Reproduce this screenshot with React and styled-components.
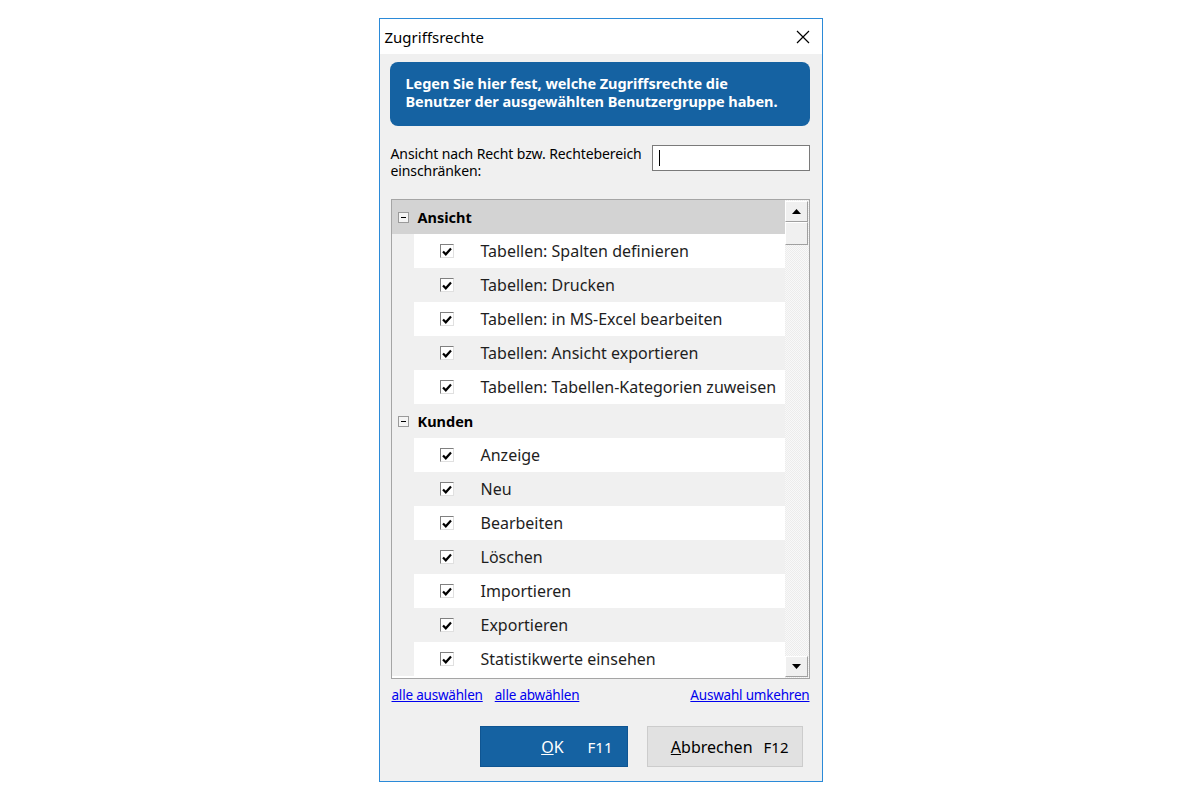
import React from 'react';
import styled, { createGlobalStyle } from 'styled-components';

const GlobalStyle = createGlobalStyle`
  html, body {
    margin: 0;
    padding: 0;
    background: #fff;
    font-family: "Noto Sans", "Open Sans", sans-serif;
  }
`;

const Page = styled.div`
  display: flex;
  justify-content: center;
  padding-top: 18px;
  padding-left: 1px;
`;

const Window = styled.div`
  width: 444px;
  height: 764px;
  box-sizing: border-box;
  border: 1px solid #2b8ad8;
  background: #f0f0f0;
  display: flex;
  flex-direction: column;
`;

const TitleBar = styled.div`
  height: 35px;
  background: #fff;
  display: flex;
  align-items: center;
  justify-content: space-between;
  padding: 0 12px 0 5px;
  font-size: 15px;
  color: #000;
`;

const Close = styled.svg`
  width: 14px;
  height: 14px;
`;

const Body = styled.div`
  flex: 1;
  display: flex;
  flex-direction: column;
  padding: 8px 12px 14px 10px;
`;

const Banner = styled.div`
  height: 64px;
  box-sizing: border-box;
  border-radius: 8px;
  background: #1562a2;
  color: #fff;
  font-weight: bold;
  font-size: 14.5px;
  line-height: 18px;
  padding: 12px 0 0 16px;
  letter-spacing: -0.05px;
`;

const FilterRow = styled.div`
  display: flex;
  justify-content: space-between;
  align-items: flex-start;
  margin-top: 19px;
  padding-left: 1px;
`;

const FilterLabel = styled.div`
  font-size: 14px;
  line-height: 17px;
  color: #000;
  width: 260px;
  letter-spacing: -0.1px;
`;

const Input = styled.div`
  width: 158px;
  height: 26px;
  box-sizing: border-box;
  border: 1px solid #7a7a7a;
  background: #fff;
  display: flex;
  align-items: center;
  padding-left: 6px;
  &::after {
    content: '';
    width: 1px;
    height: 16px;
    background: #000;
  }
`;

const ListBox = styled.div`
  margin-top: 20px;
  margin-left: 1px;
  height: 480px;
  box-sizing: border-box;
  border: 1px solid #a5a5a5;
  background: #fff;
  display: flex;
  overflow: hidden;
`;

const Rows = styled.div`
  flex: 1;
  display: flex;
  flex-direction: column;
`;

const GroupRow = styled.div`
  height: 34px;
  flex-shrink: 0;
  display: flex;
  align-items: center;
  background: ${p => (p.$active ? '#d3d3d3' : '#f0f0f0')};
  font-weight: bold;
  font-size: 14.5px;
  color: #000;
`;

const Minus = styled.span`
  width: 11px;
  height: 11px;
  box-sizing: border-box;
  border: 1px solid #9a9a9a;
  background: #f4f4f4;
  margin: 0 9px 0 6px;
  display: flex;
  align-items: center;
  justify-content: center;
  &::after {
    content: '';
    width: 5px;
    height: 1px;
    background: #000;
  }
`;

const ItemRow = styled.div`
  height: 34px;
  flex-shrink: 0;
  display: flex;
  align-items: center;
  border-left: 22px solid #f0f0f0;
  background: ${p => (p.$alt ? '#f0f0f0' : '#fff')};
  font-size: 16px;
  color: #1e1e1e;
  white-space: nowrap;
`;

const Check = styled.span`
  width: 14px;
  height: 14px;
  box-sizing: border-box;
  border-top: 1px solid #808080;
  border-left: 1px solid #808080;
  border-right: 1px solid #e0e0e0;
  border-bottom: 1px solid #e0e0e0;
  background: #fff;
  margin: 0 27px 0 26px;
  display: flex;
  align-items: center;
  justify-content: center;
`;

const ScrollBar = styled.div`
  width: 23px;
  flex-shrink: 0;
  display: flex;
  flex-direction: column;
  background-color: #f4f4f4;
  background-image: repeating-conic-gradient(#ececec 0 25%, #f9f9f9 0 50%);
  background-size: 2px 2px;
  padding-top: 1px;
  padding-right: 1px;
`;

const ScrollButton = styled.div`
  height: 21px;
  box-sizing: border-box;
  background: #f0f0f0;
  border-top: 1px solid #fff;
  border-left: 1px solid #fff;
  border-right: 1px solid #a0a0a0;
  border-bottom: 1px solid #a0a0a0;
  display: flex;
  align-items: center;
  justify-content: center;
  margin-top: ${p => (p.$down ? 'auto' : '0')};
  margin-bottom: ${p => (p.$down ? '1px' : '0')};
`;

const Thumb = styled(ScrollButton)`
  height: 23px;
`;

const Links = styled.div`
  display: flex;
  gap: 12px;
  margin-top: 8px;
  padding-left: 2px;
  font-size: 13.5px;
  line-height: 17px;
`;

const Link = styled.a`
  color: #0000ee;
  text-decoration: underline;
  cursor: pointer;
  letter-spacing: -0.2px;
  margin-left: ${p => (p.$right ? 'auto' : '0')};
`;

const Buttons = styled.div`
  margin-top: auto;
  display: flex;
  justify-content: flex-end;
  gap: 19px;
  padding-right: 7px;
`;

const Button = styled.button`
  width: ${p => p.$w}px;
  height: 41px;
  box-sizing: border-box;
  border: 1px solid ${p => (p.$primary ? '#0f5592' : '#cccccc')};
  background: ${p => (p.$primary ? '#1562a2' : '#e1e1e1')};
  color: ${p => (p.$primary ? '#fff' : '#000')};
  font-family: "Noto Sans", "Open Sans", sans-serif;
  font-size: 16px;
  display: flex;
  align-items: center;
  justify-content: flex-end;
  padding: 0 ${p => (p.$primary ? 14 : 13)}px 0 0;
  gap: ${p => (p.$primary ? 24 : 11)}px;
  u { text-decoration: underline; }
`;

const Key = styled.span`
  font-size: 15px;
`;

const CheckMark = () => (
  <svg width="10" height="9" viewBox="0 0 10 9">
    <path d="M1 4.5 L3.8 7.3 L9 1.5" stroke="#000" strokeWidth="2.2" fill="none" />
  </svg>
);

const Arrow = ({ down }) => (
  <svg width="9" height="5" viewBox="0 0 9 5">
    <path d={down ? 'M0 0 H9 L4.5 5 Z' : 'M0 5 H9 L4.5 0 Z'} fill="#000" />
  </svg>
);

const groups = [
  {
    name: 'Ansicht',
    active: true,
    items: [
      'Tabellen: Spalten definieren',
      'Tabellen: Drucken',
      'Tabellen: in MS-Excel bearbeiten',
      'Tabellen: Ansicht exportieren',
      'Tabellen: Tabellen-Kategorien zuweisen',
    ],
  },
  {
    name: 'Kunden',
    items: [
      'Anzeige',
      'Neu',
      'Bearbeiten',
      'Löschen',
      'Importieren',
      'Exportieren',
      'Statistikwerte einsehen',
    ],
  },
];

export default function App() {
  let row = 0;
  return (
    <Page>
      <GlobalStyle />
      <Window>
        <TitleBar>
          <span>Zugriffsrechte</span>
          <Close viewBox="0 0 14 14">
            <path d="M1 1 L13 13 M13 1 L1 13" stroke="#000" strokeWidth="1.2" />
          </Close>
        </TitleBar>
        <Body>
          <Banner>
            Legen Sie hier fest, welche Zugriffsrechte die<br />
            Benutzer der ausgewählten Benutzergruppe haben.
          </Banner>
          <FilterRow>
            <FilterLabel>Ansicht nach Recht bzw. Rechtebereich einschränken:</FilterLabel>
            <Input />
          </FilterRow>
          <ListBox>
            <Rows>
              {groups.map(g => {
                const header = (
                  <GroupRow key={g.name} $active={g.active}>
                    <Minus />
                    {g.name}
                  </GroupRow>
                );
                row += 1;
                const items = g.items.map(it => {
                  const alt = row % 2 === 0;
                  row += 1;
                  return (
                    <ItemRow key={it} $alt={alt}>
                      <Check><CheckMark /></Check>
                      {it}
                    </ItemRow>
                  );
                });
                return [header, ...items];
              })}
            </Rows>
            <ScrollBar>
              <ScrollButton><Arrow /></ScrollButton>
              <Thumb />
              <ScrollButton $down><Arrow down /></ScrollButton>
            </ScrollBar>
          </ListBox>
          <Links>
            <Link>alle auswählen</Link>
            <Link>alle abwählen</Link>
            <Link $right>Auswahl umkehren</Link>
          </Links>
          <Buttons>
            <Button $primary $w={148}>
              <span><u>O</u>K</span>
              <Key>F11</Key>
            </Button>
            <Button $w={156}>
              <span><u>A</u>bbrechen</span>
              <Key>F12</Key>
            </Button>
          </Buttons>
        </Body>
      </Window>
    </Page>
  );
}
